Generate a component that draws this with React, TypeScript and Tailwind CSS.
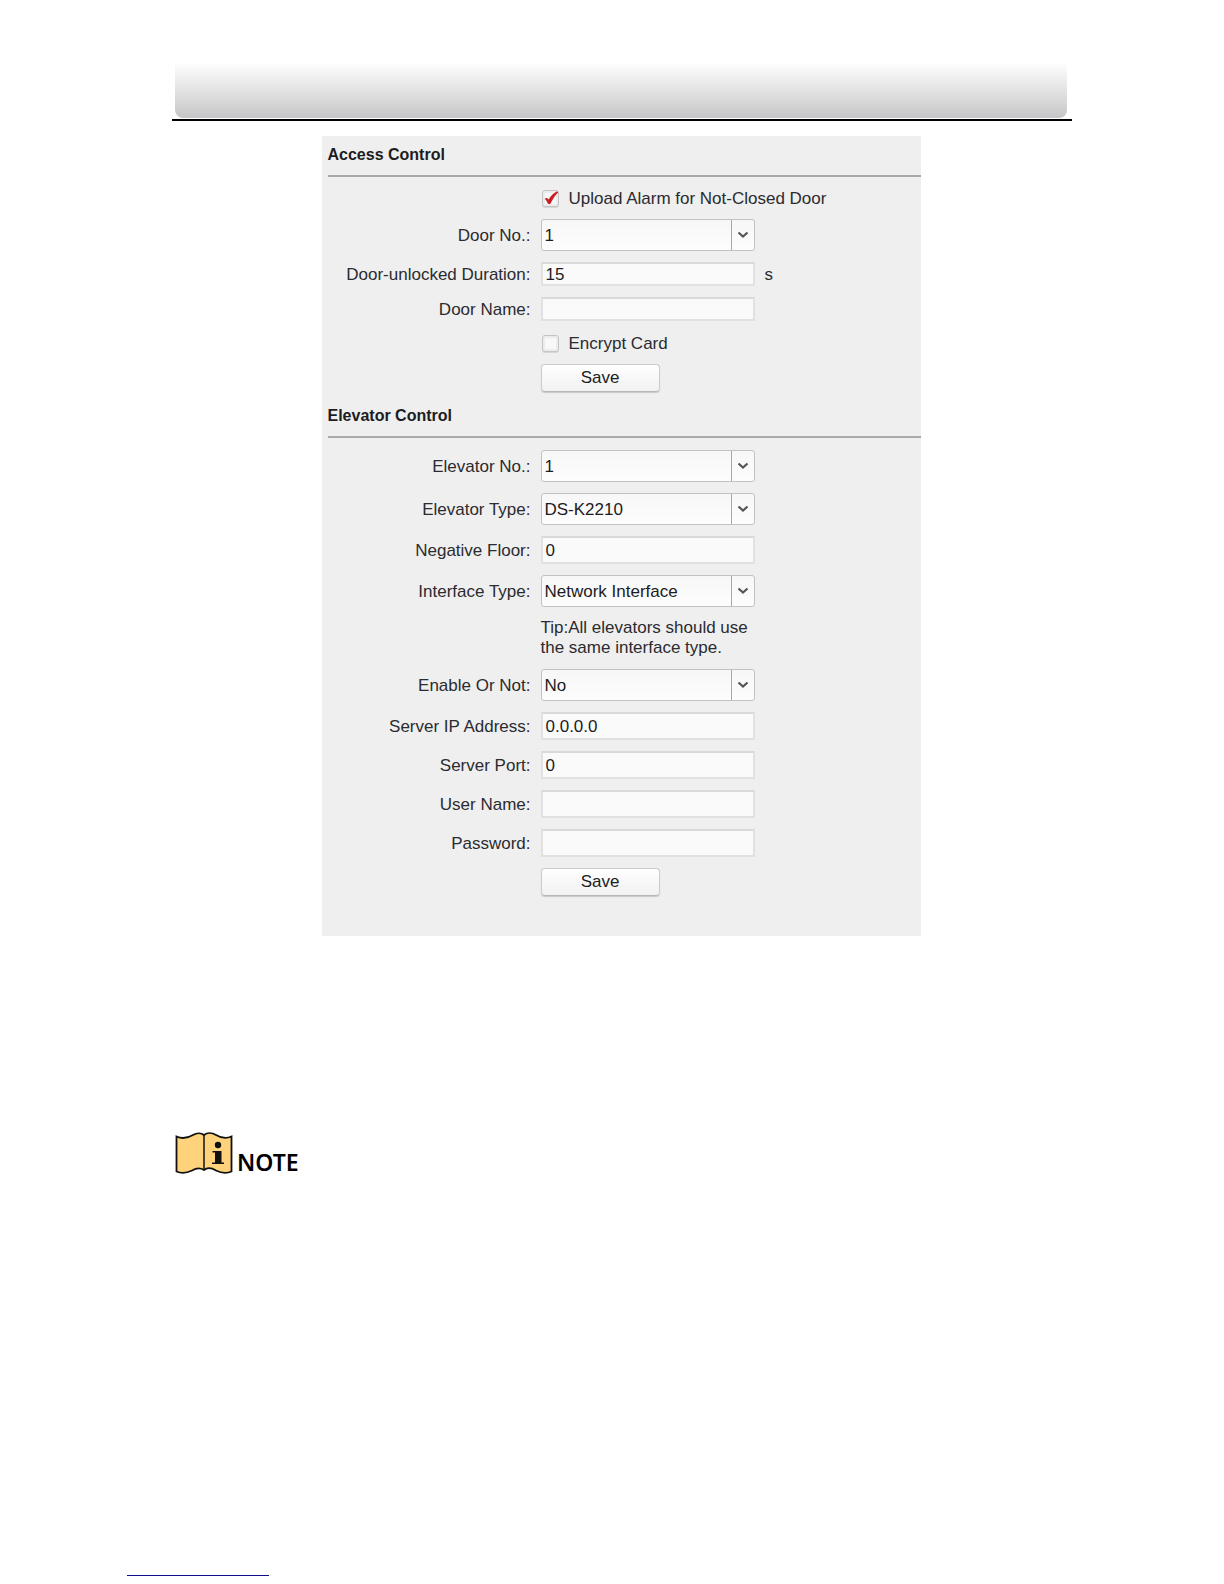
import { ReactNode, useId } from "react";

function Section({ title, children }: { title: string; children: ReactNode }) {
  return (
    <section className="group">
      <h2 className="ml-1.5 flex h-[41px] items-center border-b-2 border-[#a9a9a9] pb-px text-[16px] leading-5 font-bold text-[#1c1c22]">
        {title}
      </h2>
      <div className="flex flex-col gap-[11px] pt-[10px] group-last:pt-[12px]">{children}</div>
    </section>
  );
}

function Row({ label, id, children }: { label?: string; id?: string; children: ReactNode }) {
  return (
    <div className="flex items-center gap-2.5">
      <div className="w-[209px] shrink-0 pt-0.5 text-right">{label && <label htmlFor={id}>{label}</label>}</div>
      {children}
    </div>
  );
}

function TextField({
  label,
  value = "",
  unit,
  small,
  type = "text",
}: {
  label: string;
  value?: string;
  unit?: string;
  small?: boolean;
  type?: string;
}) {
  const id = useId();
  return (
    <Row label={label} id={id}>
      <input
        id={id}
        type={type}
        defaultValue={value}
        className={`${small ? "h-6" : "h-7"} w-[214px] border-2 border-[#e1e1e1] border-t-[#d9d9d9] bg-[#fafafa] px-[3px] pt-0.5 text-[#1c1c22] outline-none`}
      />
      {unit && <span className="pt-0.5">{unit}</span>}
    </Row>
  );
}

function SelectField({ label, options }: { label: string; options: string[] }) {
  const id = useId();
  return (
    <Row label={label} id={id}>
      <div className="relative w-[214px]">
        <select
          id={id}
          className="block h-8 w-full appearance-none rounded-[3px] border border-[#c2c2c2] bg-linear-to-b from-[#f7f7f7] to-[#fdfdfd] pt-0.5 pr-8 pl-[3px] text-[#1c1c22] outline-none"
        >
          {options.map((option) => (
            <option key={option}>{option}</option>
          ))}
        </select>
        <span className="pointer-events-none absolute inset-y-px right-px flex w-[23px] items-center justify-center border-l border-[#a8a8a8]">
          <svg viewBox="0 0 12 8" className="h-2 w-3" fill="none" stroke="#555555" strokeWidth="2.2">
            <path d="M1.5 1.5 L6 5.6 L10.5 1.5" />
          </svg>
        </span>
      </div>
    </Row>
  );
}

function CheckField({ label, checked }: { label: string; checked?: boolean }) {
  return (
    <Row>
      <label className="flex h-[21px] items-center gap-2.5 pt-0.5">
        <span className="relative ml-px size-[17px]">
          <input
            type="checkbox"
            defaultChecked={checked}
            className="peer block size-[17px] appearance-none rounded-[3px] border border-[#c4c4c4] bg-[#f8f8f8] shadow-[inset_0_0_0_2px_#ececec,0_1px_0_#d6d6d6]"
          />
          <svg
            viewBox="0 0 17 17"
            className="pointer-events-none absolute inset-0 hidden size-[17px] peer-checked:block"
            fill="#c81e24"
          >
            <path d="M2.8 8.8 C4.2 7.4 5.6 7.8 6.6 9.6 C8.8 6 11.200 3.200 15 1.200 L16.200 2.600 C13 5.600 10.800 9.200 8.600 13.400 C7.600 14.400 6.300 14.200 5.700 13.200 C4.900 11.400 4 9.900 2.800 8.800 Z" />
          </svg>
        </span>
        {label}
      </label>
    </Row>
  );
}

function SaveButton() {
  return (
    <Row>
      <button
        type="button"
        className="h-7 w-[119px] rounded-[4px] border border-[#cccccc] border-b-[#b8b8b8] bg-linear-to-b from-white to-[#f1f1f1] text-[#1c1c22] shadow-[0_1px_1px_#c8c8c8]"
      >
        Save
      </button>
    </Row>
  );
}

function NoteIcon() {
  return (
    <svg viewBox="0 0 58 42" className="h-[42px] w-[58px]" aria-hidden="true">
      <path
        d="M1.5 4.5 C7 7 13 6 18 3 C22 .6 26.500 1 29 3 C32 .6 37 .6 41 3 C46 6 51 7 56.500 4.500 V39.500 C51 42 46 41 41 38.500 C36 35.500 32 35.500 29 38 C26 36 22 35.500 17 38.500 C12 41 7 42 1.500 39.500 Z"
        fill="#ffd27c"
        stroke="#111111"
        strokeWidth="1.800"
      />
      <path d="M29 3 V38" stroke="#111111" strokeWidth="1.500" />
      <circle cx="43" cy="13" r="3.2" fill="#111111" />
      <path d="M37.500 19 H46.500 V30.500 H49 V32 H37 V30.500 H40 V20.500 H37.500 Z" fill="#111111" />
    </svg>
  );
}

export default function App() {
  return (
    <div className="flex min-h-screen flex-col bg-white font-['Liberation_Sans',Arial,sans-serif] text-[17px] leading-5 text-[#2b2b30]">
      <div className="mx-auto w-full max-w-[920px] grow pl-5">
        <header className="border-b-2 border-black pt-[62px] pr-[5px] pb-px pl-[3px]">
          <div className="h-14 rounded-b-lg bg-linear-to-b from-white via-[#e3e3e3] to-[#c6c6c8]" />
        </header>
        <main className="pr-0.5">
          <form
            className="mx-auto mt-[15px] max-w-[599px] bg-[#efefef] pb-10"
            onSubmit={(event) => event.preventDefault()}
          >
            <div className="flex flex-col gap-[5px]">
              <Section title="Access Control">
                <CheckField label="Upload Alarm for Not-Closed Door" checked />
                <SelectField label="Door No.:" options={["1"]} />
                <TextField label="Door-unlocked Duration:" value="15" unit="s" small />
                <TextField label="Door Name:" small />
                <CheckField label="Encrypt Card" />
                <SaveButton />
              </Section>
              <Section title="Elevator Control">
                <SelectField label="Elevator No.:" options={["1"]} />
                <SelectField label="Elevator Type:" options={["DS-K2210"]} />
                <TextField label="Negative Floor:" value="0" />
                <SelectField label="Interface Type:" options={["Network Interface"]} />
                <Row>
                  <p className="w-[214px]">
                    Tip:All elevators should use
                    <br />
                    the same interface type.
                  </p>
                </Row>
                <SelectField label="Enable Or Not:" options={["No", "Yes"]} />
                <TextField label="Server IP Address:" value="0.0.0.0" />
                <TextField label="Server Port:" value="0" />
                <TextField label="User Name:" />
                <TextField label="Password:" type="password" />
                <SaveButton />
              </Section>
            </div>
          </form>
          <div className="mt-[196px] flex items-end gap-1 pl-[3px]">
            <NoteIcon />
            <strong className="font-['Noto_Sans',sans-serif] text-[23px] leading-6 font-semibold text-black">NOTE</strong>
          </div>
        </main>
      </div>
      <footer className="pb-2 pl-[127px]">
        <hr className="w-[142px] border-t border-[#10108a]" />
      </footer>
    </div>
  );
}
